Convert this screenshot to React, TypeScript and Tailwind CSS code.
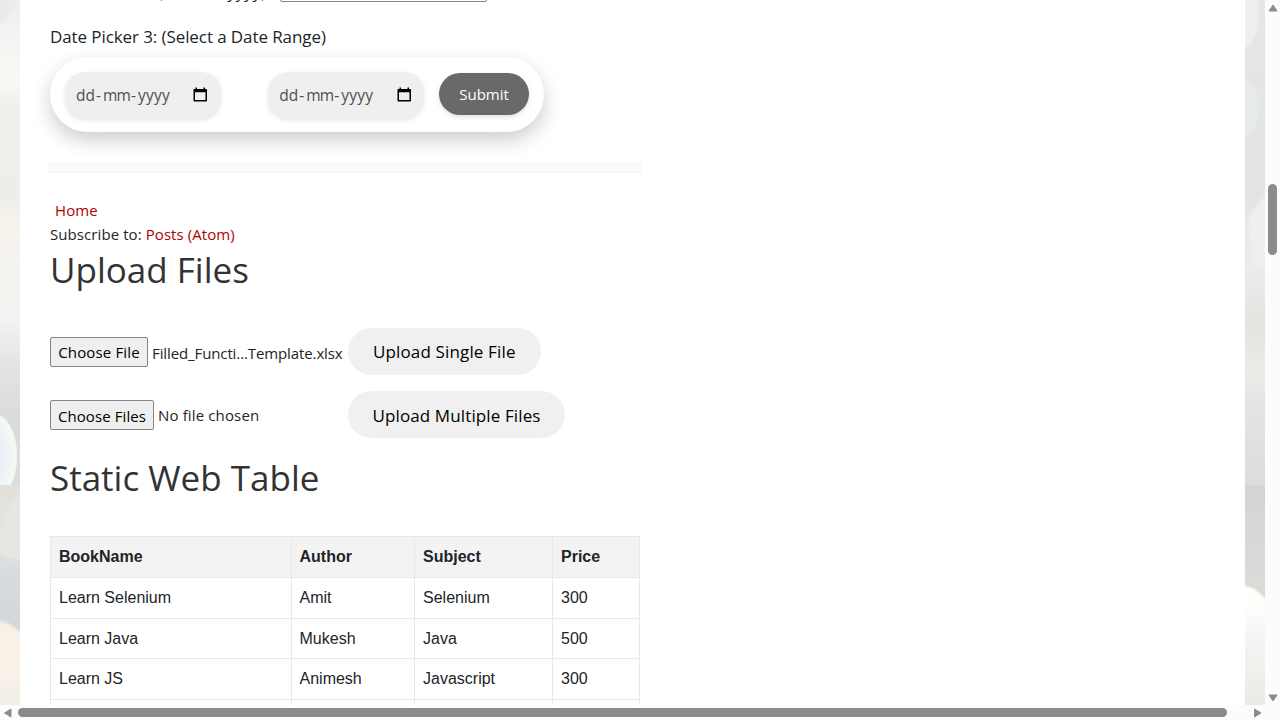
import React from 'react';

function CalendarIcon() {
  return (
    <svg width="15" height="16" viewBox="0 0 15 16" className="shrink-0">
      <path d="M2.500 0.500h1.500v1.500h6.500V0.500h1.500V2h1.200a0.800 0.800 0 0 1 .8.8v11a0.800 0.800 0 0 1-.8.8H1.300a.8.8 0 0 1-.8-.8v-11A.8.8 0 0 1 1.300 2h1.200zM2 5.200v7.900h10.500V5.200z" fill="#000" />
    </svg>
  );
}

function DateInput({ className = '' }: { className?: string }) {
  return (
    <div className={`flex h-[45.500px] items-center rounded-[20px] bg-[#efefef] pr-[12.500px] pl-[11px] shadow-[0_2px_5px_rgba(0,0,0,0.10)] ${className}`}>
      <span className="flex h-[23px] grow items-center text-[15.500px] leading-[20px] text-[#4f4f4f]">
        <span className="w-[20px]">dd</span>
        <span className="w-[7px]">-</span>
        <span className="w-[28px] tracking-[-0.8px]">mm</span>
        <span className="w-[7px]">-</span>
        <span className="tracking-[0.2px]">yyyy</span>
      </span>
      <CalendarIcon />
    </div>
  );
}

function UploadRow({ choose, chooseClass, file, fileClass, action, actionClass }: Record<string, string>) {
  return (
    <div className="flex h-[47px] items-center">
      <div className="flex w-[298px] items-center pt-px whitespace-nowrap">
        <button className={`h-[30px] rounded-[2px] border border-[#858585] bg-[#efefef] text-[15px] text-black ${chooseClass}`}>{choose}</button>
        <span className={`ml-[4px] text-[15px] leading-[24px] ${fileClass}`}>{file}</span>
      </div>
      <button className={`h-[47px] rounded-full bg-[#f0f0f0] text-[17px] leading-[47px] whitespace-nowrap text-black ${actionClass}`}>{action}</button>
    </div>
  );
}

const books = [
  ['Learn Selenium', 'Amit', 'Selenium', '300'],
  ['Learn Java', 'Mukesh', 'Java', '500'],
  ['Learn JS', 'Animesh', 'Javascript', '300'],
];

function BookTable() {
  const cell = 'border border-[#e8e8e8] px-[8px] py-0 text-left';
  return (
    <table className="w-[589px] table-fixed border-collapse font-['Liberation_Sans',sans-serif] text-[16px] leading-[24px] text-[#212529]">
      <colgroup>
        <col className="w-[240.500px]" />
        <col className="w-[123.500px]" />
        <col className="w-[138px]" />
        <col className="w-[87px]" />
      </colgroup>
      <thead>
        <tr className="h-[41px] bg-[#f3f3f3]">
          {['BookName', 'Author', 'Subject', 'Price'].map((h) => (
            <th key={h} className={`${cell} font-bold`}>{h}</th>
          ))}
        </tr>
      </thead>
      <tbody>
        {books.map((row) => (
          <tr key={row[0]} className="h-[40.700px]">
            {row.map((v, i) => (
              <td key={i} className={cell}>{v}</td>
            ))}
          </tr>
        ))}
        <tr className="h-[40.700px]">
          {[0, 1, 2, 3].map((i) => (
            <td key={i} className={cell} />
          ))}
        </tr>
      </tbody>
    </table>
  );
}

function LeftBackdrop() {
  return (
    <svg width="20" height="705" className="shrink-0">
      <defs>
        <linearGradient id="la" x1="0" y1="0" x2="0" y2="1">
          <stop offset="0" stopColor="#eeeeec" />
          <stop offset="0.08" stopColor="#f3f5f3" />
          <stop offset="0.17" stopColor="#faf8f2" />
          <stop offset="0.22" stopColor="#eff0ea" />
          <stop offset="0.4" stopColor="#eceeea" />
          <stop offset="0.47" stopColor="#f9f2ec" />
          <stop offset="0.55" stopColor="#f3f4f0" />
          <stop offset="0.66" stopColor="#f3f4f1" />
          <stop offset="0.75" stopColor="#e3e4e4" />
          <stop offset="0.85" stopColor="#dadbdd" />
          <stop offset="1" stopColor="#dadddf" />
        </linearGradient>
        <linearGradient id="lb" x1="0" y1="0" x2="0" y2="1">
          <stop offset="0" stopColor="#e3e0d9" />
          <stop offset="0.25" stopColor="#e3e4e0" />
          <stop offset="0.4" stopColor="#d6dbde" />
          <stop offset="0.62" stopColor="#d3d8dd" />
          <stop offset="1" stopColor="#d9dbdb" />
        </linearGradient>
        <linearGradient id="lc" x1="0" y1="0" x2="0" y2="1">
          <stop offset="0" stopColor="#f9f1e2" />
          <stop offset="0.6" stopColor="#f8f2ea" />
          <stop offset="1" stopColor="#efebe2" />
        </linearGradient>
        <radialGradient id="ld">
          <stop offset="0" stopColor="#e4eff5" />
          <stop offset="0.7" stopColor="#f0f4f5" />
          <stop offset="1" stopColor="#f7faf5" />
        </radialGradient>
        <filter id="soft" x="-30%" width="160%"><feGaussianBlur stdDeviation="1.500" /></filter>
      </defs>
      <rect width="20" height="485" fill="url(#la)" />
      <path d="M-3 -3H19Q13 16 -3 28Z" fill="#ebebea" filter="url(#soft)" />
      <ellipse cx="-6" cy="456" rx="23" ry="42" fill="url(#ld)" stroke="#e2f5df" />
      <rect y="485" width="20" height="220" fill="url(#lb)" />
      <path d="M-3 545C1 530 8 500 23 490V558Q10 562 -3 550Z" fill="#e6e7e1" filter="url(#soft)" />
      <path d="M-4 620Q12 622 24 636V710H-4Z" fill="url(#lc)" filter="url(#soft)" />
    </svg>
  );
}

function RightBackdrop() {
  return (
    <svg width="20" height="705" className="shrink-0">
      <defs>
        <linearGradient id="ra" x1="0" y1="0" x2="0" y2="1">
          <stop offset="0" stopColor="#e5e6e6" />
          <stop offset="0.4" stopColor="#e3e3e4" />
          <stop offset="0.55" stopColor="#ececed" />
          <stop offset="0.67" stopColor="#e3e4e0" />
          <stop offset="0.77" stopColor="#ebece8" />
          <stop offset="0.83" stopColor="#e4e4e5" />
          <stop offset="1" stopColor="#dcdcdd" />
        </linearGradient>
        <linearGradient id="rb" x1="0" y1="0" x2="0" y2="1">
          <stop offset="0" stopColor="#d4d4d4" />
          <stop offset="1" stopColor="#dcdcda" />
        </linearGradient>
        <linearGradient id="rc" x1="0" y1="0" x2="0" y2="1">
          <stop offset="0" stopColor="#fffffc" />
          <stop offset="0.2" stopColor="#fdfefc" />
          <stop offset="0.5" stopColor="#f3f4f1" />
          <stop offset="1" stopColor="#e9ebe7" />
        </linearGradient>
        <filter id="soft2" x="-50%" width="200%"><feGaussianBlur stdDeviation="1.500" /></filter>
      </defs>
      <rect width="20" height="485" fill="url(#ra)" />
      <ellipse cx="-2" cy="12" rx="16" ry="36" fill="#eeefef" filter="url(#soft2)" />
      <ellipse cx="0" cy="108" rx="14" ry="26" fill="#e8ebec" filter="url(#soft2)" />
      <path d="M24 194Q8 206 3 222L8 262L24 276Z" fill="#eff0ed" filter="url(#soft2)" />
      <rect y="485" width="20" height="120" fill="url(#rb)" />
      <path d="M0 586Q12 588 20 599V705H0Z" fill="url(#rc)" />
      <path d="M0 586Q12 588 20 599" fill="none" stroke="#f4efd2" strokeWidth="1.500" />
    </svg>
  );
}

export default function App() {
  return (
    <div className="flex h-[720px] w-[1280px] flex-col overflow-hidden bg-white font-['Open_Sans','Noto_Sans',sans-serif] text-[#212529]">
      <div className="flex h-[705px] overflow-hidden">
        <LeftBackdrop />
        <main className="flex w-[1225px] shrink-0 flex-col bg-white pl-[30px]">
          <div className="flex h-[24px] shrink-0 items-end pb-[13px] text-[17px] leading-[24px] whitespace-nowrap">
            <span className="mb-[7px] w-[229.500px] shrink-0 tracking-[-0.05px]">Date Picker 2 (dd/mm/yyyy)</span>
            <span className="mb-[9px] h-[29px] w-[207px] shrink-0 rounded-[2px] border border-[#858585]" />
          </div>
          <p className="h-[33px] shrink-0 text-[17px] leading-[26px] tracking-[-0.09px]">Date Picker 3: (Select a Date Range)</p>
          <div className="flex h-[74.500px] w-[494px] shrink-0 rounded-full bg-white px-[15px] pt-[15px] shadow-[0_8px_20px_rgba(0,0,0,0.2)]">
            <DateInput className="w-[156px]" />
            <DateInput className="ml-[47.500px] w-[156px]" />
            <button className="mt-[0.800px] ml-[15px] h-[42.700px] w-[90px] rounded-full bg-[#696969] text-[15px] font-medium text-white shadow-[0_2px_5px_rgba(0,0,0,0.12)]">Submit</button>
          </div>
          <div className="mt-[30.500px] -ml-[2px] h-[11px] w-[594px] shrink-0 border-b border-[#f5f5f5] bg-[#fafafa]" />
          <div className="mt-[25px] h-[24px] shrink-0 pl-[5px] text-[15px] leading-[24px] tracking-[0.1px] text-[#b00000]">Home</div>
          <div className="h-[24px] shrink-0 text-[15px] leading-[24px] tracking-[0.080px]">
            Subscribe to: <span className="text-[#b00000]">Posts (Atom)</span>
          </div>
          <h2 className="h-[82px] shrink-0 text-[35px] leading-[48px] text-[#333]">Upload Files</h2>
          <UploadRow
            choose="Choose File"
            chooseClass="w-[98px] tracking-[0.15px]"
            file="Filled_Functi...Template.xlsx"
            fileClass="tracking-[-0.11px] pt-[2px]"
            action="Upload Single File"
            actionClass="w-[192.500px] tracking-[0.15px]"
          />
          <div className="h-[16px] shrink-0" />
          <UploadRow
            choose="Choose Files"
            chooseClass="w-[104px] tracking-[0.1px] pt-[2px]"
            file="No file chosen"
            fileClass="tracking-[0.14px]"
            action="Upload Multiple Files"
            actionClass="w-[217px] tracking-[0.12px] pt-px"
          />
          <h2 className="mt-[16px] h-[82px] shrink-0 text-[35px] leading-[48px] text-[#333]">Static Web Table</h2>
          <BookTable />
        </main>
        <RightBackdrop />
        <div className="flex h-[705px] w-[15px] shrink-0 flex-col items-center justify-between bg-[#fcfcfc] pt-[4px] pb-[3px]">
          <svg width="10" height="8"><path d="M5 1L9 7H1Z" fill="#8b8b8b" stroke="#8b8b8b" strokeLinejoin="round" /></svg>
          <div className="flex w-[9px] grow flex-col pt-[172px]">
            <div className="h-[71px] rounded-full bg-[#8b8b8b]" />
          </div>
          <svg width="10" height="8"><path d="M5 7L9 1H1Z" fill="#8b8b8b" stroke="#8b8b8b" strokeLinejoin="round" /></svg>
        </div>
      </div>
      <div className="flex h-[15px] items-center bg-[#fcfcfc] pl-[3px]">
        <svg width="9" height="10"><path d="M1.500 5L8 1V9Z" fill="#8b8b8b" stroke="#8b8b8b" strokeLinejoin="round" /></svg>
        <div className="ml-[6px] h-[8.500px] w-[1209px] rounded-full bg-[#8b8b8b]" />
        <svg width="9" height="10" className="ml-[26px]"><path d="M8 5L1.500 1V9Z" fill="#8b8b8b" stroke="#8b8b8b" strokeLinejoin="round" /></svg>
      </div>
    </div>
  );
}
